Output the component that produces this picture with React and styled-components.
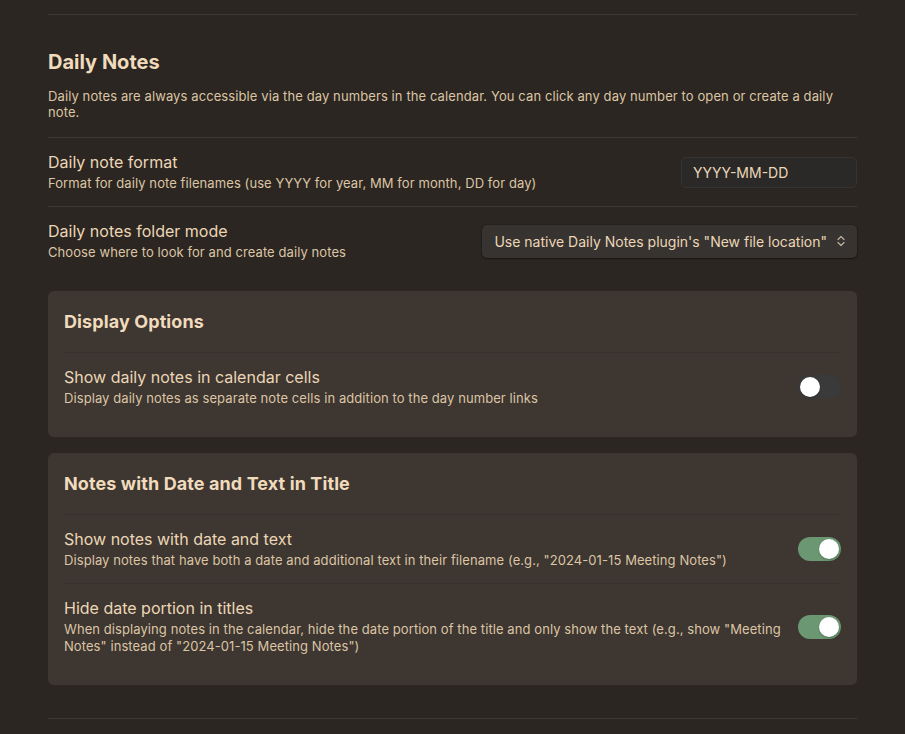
import React, { useState } from 'react';
import styled, { createGlobalStyle } from 'styled-components';

const GlobalStyle = createGlobalStyle`
  html, body {
    margin: 0;
    background: #2b2621;
  }
  body {
    font-family: Inter, "Noto Sans", sans-serif;
    -webkit-font-smoothing: antialiased;
  }
`;

const Page = styled.div`
  padding: 14px 48px 0;
  min-height: 734px;
  box-sizing: border-box;
  background: #2b2621;
  color: #ecd6b6;
`;

const Rule = styled.div`
  border-top: 1px solid #3b3936;
`;

const SectionHeading = styled.h2`
  margin: 35px 0 14px;
  font-size: 20px;
  line-height: 24px;
  font-weight: 700;
  color: #f0dbbd;
`;

const Intro = styled.p`
  margin: 0 0 17px;
  font-size: 13px;
  line-height: 16px;
  letter-spacing: 0.1px;
  color: #dcc5a4;
`;

const Row = styled.div`
  display: flex;
  align-items: center;
  justify-content: space-between;
  gap: 12px;
  padding: 14px 0;
  border-top: ${({ $first }) => ($first ? 'none' : '1px solid #3b3936')};
`;

const Info = styled.div`
  display: flex;
  flex-direction: column;
  gap: 3px;
  min-width: 0;
`;

const Name = styled.div`
  font-size: 16px;
  line-height: 20px;
  color: #ecd6b6;
`;

const Desc = styled.div`
  font-size: 13px;
  line-height: 17px;
  letter-spacing: 0.08px;
  color: #dcc5a4;
`;

const TextInput = styled.input`
  flex: none;
  width: 176px;
  height: 31px;
  box-sizing: border-box;
  padding: 0 11px;
  border: 1px solid #363432;
  border-radius: 5px;
  background: #2a2928;
  color: #ecd6b6;
  font: 14px Inter, "Noto Sans", sans-serif;
  outline: none;
`;

const SelectBox = styled.div`
  flex: none;
  display: flex;
  align-items: center;
  gap: 10px;
  height: 33px;
  box-sizing: border-box;
  padding: 0 12px;
  border-radius: 5px;
  background: #363330;
  box-shadow: 0 1px 2px rgba(0, 0, 0, 0.35), 0 0 0 1px rgba(0, 0, 0, 0.12);
  font-size: 14px;
  color: #ecd6b6;
  white-space: nowrap;
`;

const Card = styled.section`
  margin-top: 16px;
  padding: 20px 16px 16px;
  border-radius: 6px;
  background: #3d3631;
`;

const CardTitle = styled.h3`
  margin: 0;
  padding-bottom: 19px;
  border-bottom: 1px solid #37302c;
  font-size: 18px;
  line-height: 22px;
  font-weight: 700;
  letter-spacing: 0.1px;
  color: #f0dbbd;
`;

const CardRow = styled(Row)`
  border-top: ${({ $first }) => ($first ? 'none' : '1px solid #37302c')};
`;

const Track = styled.button`
  flex: none;
  position: relative;
  width: 43px;
  height: 24px;
  padding: 0;
  border: none;
  border-radius: 12px;
  background: ${({ $on }) => ($on ? '#6b9872' : '#3a3a3b')};
  cursor: pointer;
`;

const Knob = styled.span`
  position: absolute;
  top: 2px;
  left: ${({ $on }) => ($on ? '21px' : '2px')};
  width: 20px;
  height: 20px;
  border-radius: 50%;
  background: #ffffff;
  box-shadow: 0 1px 2px rgba(0, 0, 0, 0.25);
`;

const BottomRule = styled(Rule)`
  margin-top: 33px;
`;

const Toggle = ({ initial }) => {
  const [on, setOn] = useState(initial);
  return (
    <Track $on={on} onClick={() => setOn(!on)}>
      <Knob $on={on} />
    </Track>
  );
};

const UpDown = () => (
  <svg width="8" height="12" viewBox="0 0 8 12" fill="none" stroke="#bfb2a2" strokeWidth="1.2" strokeLinecap="round" strokeLinejoin="round">
    <path d="M1 4.5 4 1.5 7 4.5" />
    <path d="M1 7.5 4 10.5 7 7.5" />
  </svg>
);

const App = () => (
  <Page>
    <GlobalStyle />
    <Rule />
    <SectionHeading>Daily Notes</SectionHeading>
    <Intro>
      Daily notes are always accessible via the day numbers in the calendar. You can click any day number to open or create a daily note.
    </Intro>

    <Row>
      <Info>
        <Name>Daily note format</Name>
        <Desc>Format for daily note filenames (use YYYY for year, MM for month, DD for day)</Desc>
      </Info>
      <TextInput defaultValue="YYYY-MM-DD" />
    </Row>
    <Row>
      <Info>
        <Name>Daily notes folder mode</Name>
        <Desc>Choose where to look for and create daily notes</Desc>
      </Info>
      <SelectBox>
        Use native Daily Notes plugin's "New file location"
        <UpDown />
      </SelectBox>
    </Row>

    <Card>
      <CardTitle>Display Options</CardTitle>
      <CardRow $first>
        <Info>
          <Name>Show daily notes in calendar cells</Name>
          <Desc>Display daily notes as separate note cells in addition to the day number links</Desc>
        </Info>
        <Toggle initial={false} />
      </CardRow>
    </Card>

    <Card>
      <CardTitle>Notes with Date and Text in Title</CardTitle>
      <CardRow $first>
        <Info>
          <Name>Show notes with date and text</Name>
          <Desc>Display notes that have both a date and additional text in their filename (e.g., "2024-01-15 Meeting Notes")</Desc>
        </Info>
        <Toggle initial />
      </CardRow>
      <CardRow>
        <Info>
          <Name>Hide date portion in titles</Name>
          <Desc>
            When displaying notes in the calendar, hide the date portion of the title and only show the text (e.g., show "Meeting Notes" instead of "2024-01-15 Meeting Notes")
          </Desc>
        </Info>
        <Toggle initial />
      </CardRow>
    </Card>

    <BottomRule />
  </Page>
);

export default App;
